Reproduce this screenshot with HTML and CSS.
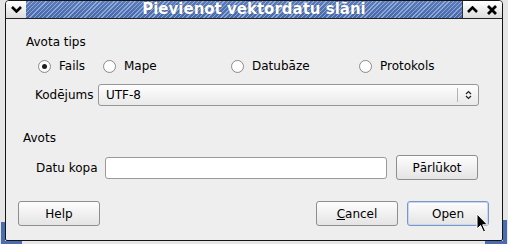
FILE: index.html
```html
<!DOCTYPE html>
<html lang="lv">
<head>
<meta charset="UTF-8">
<title>Pievienot vektordatu slāni</title>
<link rel="stylesheet" href="styles.css">
</head>
<body>
<div class="window">
<div class="frame">
<!-- Title bar -->
<div class="titlebar">
<div class="tb-menu">
<svg width="11" height="7" viewBox="0 0 11 7"><polyline points="1,1 5.5,5.5 10,1" fill="none" stroke="#000" stroke-width="2.6"/></svg>
</div>
<div class="tb-title">Pievienot vektordatu slāni</div>
<div class="tb-btn sep">
<svg width="11" height="7" viewBox="0 0 11 7"><polyline points="1,6 5.5,1.5 10,6" fill="none" stroke="#000" stroke-width="2.6"/></svg>
</div>
<div class="tb-btn">
<svg width="10" height="10" viewBox="0 0 10 10"><path d="M1,1 L9,9 M9,1 L1,9" stroke="#000" stroke-width="2.8"/></svg>
</div>
</div>

<div class="content">
<!-- Source type -->
<div class="group-title first">Avota tips</div>
<div class="radios">
<label class="radio"><span class="dot checked"></span>Fails</label>
<label class="radio"><span class="dot"></span>Mape</label>
<label class="radio"><span class="dot"></span>Datubāze</label>
<label class="radio"><span class="dot"></span>Protokols</label>
</div>
<div class="enc-row">
<span class="label">Kodējums</span>
<div class="combo">
<span class="combo-text">UTF-8</span>
<span class="combo-arrow">
<svg width="7" height="10" viewBox="0 0 7 10"><polyline points="1,4 3.5,1.5 6,4" fill="none" stroke="#222" stroke-width="1.2"/><polyline points="1,6 3.5,8.5 6,6" fill="none" stroke="#222" stroke-width="1.2"/></svg>
</span>
</div>
</div>

<!-- Source -->
<div class="group-title second">Avots</div>
<div class="src-row">
<span class="label">Datu kopa</span>
<div class="input"></div>
<button class="btn">Pārlūkot</button>
</div>

<!-- Dialog buttons -->
<div class="actions">
<button class="btn">Help</button>
<span class="spacer"></span>
<button class="btn"><u>C</u>ancel</button>
<button class="btn default">Open</button>
</div>
</div>
</div>

<span class="grip grip-lv"></span>
<span class="grip grip-lh"></span>
<span class="grip grip-rv"></span>
<span class="grip grip-rh"></span>

<svg class="cursor" width="13" height="21" viewBox="0 0 13 21"><path d="M1,1 L1,16 L4.5,12.5 L7.5,19 L9.5,18 L6.7,11.8 L11.5,11.8 Z" fill="#000" stroke="#fff" stroke-width="1"/></svg>
</div>
</body>
</html>
```

FILE: styles.css
```css
body {
margin: 0;
padding: 0;
font-family: "DejaVu Sans", sans-serif;
font-size: 12px;
color: #000;
background-color: #e6e6e6;
}
.window {
position: relative;
width: 508px;
height: 244px;
padding: 0 5px 3px 5px;
box-sizing: border-box;
background-color: #e6e6e6;
}
.frame {
height: 241px;
box-sizing: border-box;
border: 1px solid #151515;
border-radius: 4px 4px 2px 2px;
background-color: #eeeeee;
display: flex;
flex-direction: column;
overflow: hidden;
}

/* title bar */
.titlebar {
height: 17px;
border-bottom: 1px solid #222;
display: flex;
}
.tb-menu, .tb-btn {
width: 20px;
display: flex;
align-items: center;
justify-content: center;
background: linear-gradient(#ffffff, #dcdcdc);
}
.tb-btn.sep {
border-left: 1px solid #333;
width: 19px;
}
.tb-title {
flex: 1;
padding-left: 20px;
text-align: center;
color: #fff;
font-weight: bold;
font-size: 15px;
line-height: 17px;
text-shadow: 0 0 1px rgba(0, 0, 0, 0.4);
background:
repeating-linear-gradient(135deg, rgba(255, 255, 255, 0) 0, rgba(255, 255, 255, 0) 2px, rgba(175, 198, 238, 0.65) 2px, rgba(175, 198, 238, 0.65) 3px),
linear-gradient(#5a7bba, #4868a8);
}

/* content */
.content {
flex: 1;
display: flex;
flex-direction: column;
}
.group-title {
line-height: 16px;
}
.group-title.first {
margin-top: 15px;
padding-left: 20px;
}
.group-title.second {
margin-top: 24px;
padding-left: 17px;
}
.radios {
margin-top: 8px;
padding-left: 32px;
height: 16px;
display: grid;
grid-template-columns: 65px 128px 128px auto;
}
.radio {
display: flex;
align-items: center;
line-height: 16px;
}
.dot {
width: 11px;
height: 11px;
margin-right: 8px;
border: 1px solid #8c8c8c;
border-radius: 50%;
background: radial-gradient(circle at 50% 40%, #ffffff 55%, #e8e8e8);
display: flex;
align-items: center;
justify-content: center;
}
.dot.checked::after {
content: "";
width: 5px;
height: 5px;
border-radius: 50%;
background-color: #1e1e1e;
}

.enc-row {
margin-top: 10px;
padding: 0 23px 0 29px;
height: 22px;
display: grid;
grid-template-columns: 63px 1fr;
align-items: center;
}
.combo {
height: 22px;
box-sizing: border-box;
border: 1px solid #969696;
border-radius: 3px;
background: linear-gradient(#fefefe, #e9e9e9);
display: flex;
align-items: center;
}
.combo-text {
flex: 1;
padding-left: 7px;
}
.combo-arrow {
width: 20px;
height: 14px;
border-left: 1px solid #b4b4b4;
display: flex;
align-items: center;
justify-content: center;
}

.src-row {
margin-top: 9px;
padding: 0 24px 0 30px;
height: 25px;
display: flex;
align-items: center;
}
.src-row .label {
width: 69px;
}
.input {
width: 282px;
height: 22px;
box-sizing: border-box;
margin-right: 9px;
border: 1px solid #9a9a9a;
border-radius: 3px;
background-color: #fff;
}

.btn {
width: 82px;
height: 25px;
padding: 0;
box-sizing: border-box;
border: 1px solid #8e8e8e;
border-radius: 3px;
background: linear-gradient(#fdfdfd, #e4e4e4);
font-family: "DejaVu Sans", sans-serif;
font-size: 12px;
color: #000;
}
.btn.default {
border-color: #7b97c9;
box-shadow: inset 0 0 0 1px #c9d7ef;
}
.actions {
margin-top: 21px;
padding: 0 13px 0 12px;
display: flex;
gap: 9px;
}
.spacer {
flex: 1;
}

/* resize grips and pointer */
.grip {
position: absolute;
background-color: #4b6db0;
}
.grip-lv {
left: 1px;
top: 222px;
width: 4px;
height: 22px;
}
.grip-lh {
left: 1px;
top: 241px;
width: 21px;
height: 3px;
}
.grip-rv {
left: 503px;
top: 220px;
width: 4px;
height: 24px;
}
.grip-rh {
left: 485px;
top: 241px;
width: 22px;
height: 3px;
}
.cursor {
position: absolute;
left: 476px;
top: 213px;
}
```
